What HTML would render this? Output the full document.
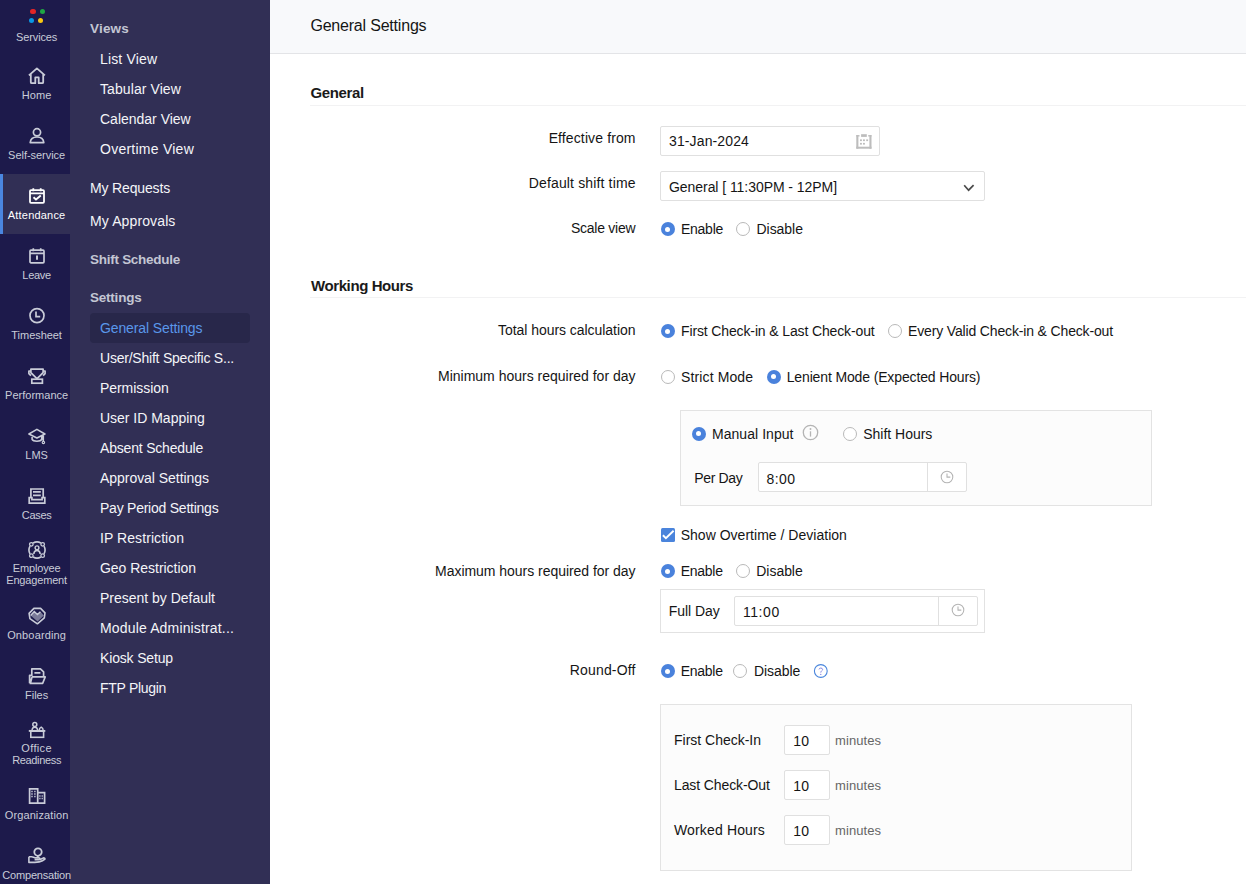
<!DOCTYPE html>
<html><head><meta charset="utf-8"><title>General Settings</title>
<style>
html,body{margin:0;padding:0;width:1246px;height:884px;overflow:hidden;position:relative;font-family:"Liberation Sans", sans-serif;}
.t{position:absolute;line-height:1;white-space:nowrap;}
</style></head><body>
<div style="position:absolute;left:0px;top:0px;width:70px;height:884px;background:#1d1a4b"></div>
<div style="position:absolute;left:70px;top:0px;width:200px;height:884px;background:#312f55"></div>
<div style="position:absolute;left:270px;top:0px;width:976px;height:884px;background:#fff"></div>
<div style="position:absolute;left:30.4px;top:8.6px;width:5.6px;height:5.6px;border-radius:50%;background:#e42527"></div>
<div style="position:absolute;left:39.6px;top:8.6px;width:5.6px;height:5.6px;border-radius:50%;background:#1fa744"></div>
<div style="position:absolute;left:28.6px;top:17.7px;width:5.6px;height:5.6px;border-radius:50%;background:#0a98e5"></div>
<div style="position:absolute;left:37.8px;top:17.7px;width:5.6px;height:5.6px;border-radius:50%;background:#f9c712"></div>
<div class="t" style="top:32.19px;font-size:11px;font-weight:400;color:#c9ccd8;letter-spacing:-0.148px;left:-63.4px;width:200px;text-align:center;">Services</div>
<div style="position:absolute;left:0px;top:174px;width:70px;height:60px;background:#312f55"></div>
<div style="position:absolute;left:0px;top:174px;width:3px;height:60px;background:#4a86e0"></div>
<svg style="position:absolute;left:27.5px;top:67px" width="18" height="18" viewBox="0 0 18 18"><path d="M0.9 8.4 L8.9 1.4 L16.9 8.4 M2.8 6.8 V15.2 Q2.8 16.2 3.8 16.2 H7.3 V10.4 H10.7 V16.2 H14.2 Q15.2 16.2 15.2 15.2 V6.8" fill="none" stroke="#c9ccd8" stroke-width="1.8" stroke-linejoin="round"/></svg>
<div class="t" style="top:89.69px;font-size:11px;font-weight:400;color:#c9ccd8;letter-spacing:0.039px;left:-63.4px;width:200px;text-align:center;">Home</div>
<svg style="position:absolute;left:27.5px;top:127px" width="18" height="18" viewBox="0 0 18 18"><circle cx="9" cy="5.3" r="3.6" fill="none" stroke="#c9ccd8" stroke-width="1.7"/><path d="M2.2 15.6 C2.6 11.5 5.4 10 9 10 C12.6 10 15.4 11.5 15.8 15.6 Z" fill="none" stroke="#c9ccd8" stroke-width="1.7" stroke-linejoin="round"/></svg>
<div class="t" style="top:149.69px;font-size:11px;font-weight:400;color:#c9ccd8;letter-spacing:-0.039px;left:-63.4px;width:200px;text-align:center;">Self-service</div>
<svg style="position:absolute;left:27.5px;top:187px" width="18" height="18" viewBox="0 0 18 18"><rect x="2" y="3.2" width="14" height="12.6" rx="1" fill="none" stroke="#ffffff" stroke-width="1.8"/><path d="M2 6.4 H16 M5.3 1.2 V4.2 M12.7 1.2 V4.2" stroke="#ffffff" stroke-width="1.8"/><path d="M5.5 10.2 L8 12.4 L12.8 8.5" fill="none" stroke="#ffffff" stroke-width="1.9"/></svg>
<div class="t" style="top:209.69px;font-size:11px;font-weight:400;color:#ffffff;letter-spacing:0.204px;left:-63.4px;width:200px;text-align:center;">Attendance</div>
<svg style="position:absolute;left:27.5px;top:247px" width="18" height="18" viewBox="0 0 18 18"><rect x="2" y="3.2" width="14" height="12.6" rx="1" fill="none" stroke="#c9ccd8" stroke-width="1.7"/><path d="M2 6.4 H16 M5.3 1.2 V4.2 M12.7 1.2 V4.2" stroke="#c9ccd8" stroke-width="1.7"/><path d="M9 8.6 V12.8" stroke="#c9ccd8" stroke-width="2"/></svg>
<div class="t" style="top:269.69px;font-size:11px;font-weight:400;color:#c9ccd8;letter-spacing:-0.257px;left:-63.4px;width:200px;text-align:center;">Leave</div>
<svg style="position:absolute;left:27.5px;top:307px" width="18" height="18" viewBox="0 0 18 18"><circle cx="9" cy="8.6" r="7" fill="none" stroke="#c9ccd8" stroke-width="1.7"/><path d="M8 4.5 V9.6 H12.2" fill="none" stroke="#c9ccd8" stroke-width="1.7"/></svg>
<div class="t" style="top:329.69px;font-size:11px;font-weight:400;color:#c9ccd8;letter-spacing:-0.050px;left:-63.4px;width:200px;text-align:center;">Timesheet</div>
<svg style="position:absolute;left:27.5px;top:367px" width="18" height="18" viewBox="0 0 18 18"><path d="M2.9 2.1 H15.1 V5.6 L9.6 11.1 H8.4 L2.9 5.6 Z M2.9 4 H0.9 V6.6 L2.9 8.6 M15.1 4 H17.1 V6.6 L15.1 8.6 M9 11 V12" fill="none" stroke="#c9ccd8" stroke-width="1.7" stroke-linejoin="round"/><rect x="3.8" y="12.2" width="10.6" height="4" fill="none" stroke="#c9ccd8" stroke-width="1.7"/></svg>
<div class="t" style="top:389.69px;font-size:11px;font-weight:400;color:#c9ccd8;letter-spacing:0.011px;left:-63.4px;width:200px;text-align:center;">Performance</div>
<svg style="position:absolute;left:27.5px;top:427px" width="18" height="18" viewBox="0 0 18 18"><path d="M0.9 7 L8.9 2.4 L16.9 7 L8.9 11 Z M4.1 8.8 V12.4 C5.4 14.8 12.4 14.8 13.7 12.4 V8.8 M15.3 7.6 V14.2" fill="none" stroke="#c9ccd8" stroke-width="1.6" stroke-linejoin="round"/><circle cx="15.4" cy="15.5" r="1.2" fill="none" stroke="#c9ccd8" stroke-width="1.2"/></svg>
<div class="t" style="top:449.69px;font-size:11px;font-weight:400;color:#c9ccd8;letter-spacing:0.025px;left:-63.4px;width:200px;text-align:center;">LMS</div>
<svg style="position:absolute;left:27.5px;top:487px" width="18" height="18" viewBox="0 0 18 18"><path d="M2.9 9.8 V2 H15.2 V9.8 M5 4.9 H12.8 M5 8.3 H12.8 M1.2 10.6 H3.9 V12.6 H14.1 V10.6 H16.8 V16.2 H1.2 Z" fill="none" stroke="#c9ccd8" stroke-width="1.7"/></svg>
<div class="t" style="top:509.69px;font-size:11px;font-weight:400;color:#c9ccd8;letter-spacing:-0.338px;left:-63.4px;width:200px;text-align:center;">Cases</div>
<svg style="position:absolute;left:27.5px;top:541px" width="18" height="18" viewBox="0 0 18 18"><path d="M5.12 2.00 A8 8 0 0 1 12.88 2.00 M16.00 5.12 A8 8 0 0 1 16.00 12.88 M12.88 16.00 A8 8 0 0 1 5.12 16.00 M2.00 12.88 A8 8 0 0 1 2.00 5.12" fill="none" stroke="#c9ccd8" stroke-width="1.6"/><circle cx="3.34" cy="3.34" r="1.8" fill="none" stroke="#c9ccd8" stroke-width="1.3"/><circle cx="14.66" cy="3.34" r="1.8" fill="none" stroke="#c9ccd8" stroke-width="1.3"/><circle cx="14.66" cy="14.66" r="1.8" fill="none" stroke="#c9ccd8" stroke-width="1.3"/><circle cx="3.34" cy="14.66" r="1.8" fill="none" stroke="#c9ccd8" stroke-width="1.3"/><circle cx="9" cy="6.8" r="1.9" fill="none" stroke="#c9ccd8" stroke-width="1.4"/><path d="M5.8 13 C6 10.6 7.4 9.6 9 9.6 C10.6 9.6 12 10.6 12.2 13" fill="none" stroke="#c9ccd8" stroke-width="1.5"/></svg>
<div class="t" style="top:563.19px;font-size:11px;font-weight:400;color:#c9ccd8;letter-spacing:-0.153px;left:-63.4px;width:200px;text-align:center;">Employee</div>
<div class="t" style="top:574.69px;font-size:11px;font-weight:400;color:#c9ccd8;letter-spacing:-0.169px;left:-63.4px;width:200px;text-align:center;">Engagement</div>
<svg style="position:absolute;left:27.5px;top:607px" width="18" height="18" viewBox="0 0 18 18"><path d="M5.9 1.4 L12.6 1.4 L17 5.9 L16.3 10.8 L9.4 16.8 L1.9 11.6 L1.1 6.4 Z" fill="none" stroke="#c9ccd8" stroke-width="1.6" stroke-linejoin="round"/><path d="M2.6 8.4 L6.3 4.6 L9.2 7.2 L12.4 4.8 L15.8 8.4 L9.6 14.6 Z" fill="#c9ccd8" fill-opacity="0.55"/><path d="M2.6 8.4 L6.3 4.6 L9.4 7.6 L12.4 4.8" fill="none" stroke="#c9ccd8" stroke-width="1.4"/></svg>
<div class="t" style="top:629.69px;font-size:11px;font-weight:400;color:#c9ccd8;letter-spacing:0.140px;left:-63.4px;width:200px;text-align:center;">Onboarding</div>
<svg style="position:absolute;left:27.5px;top:667px" width="18" height="18" viewBox="0 0 18 18"><path d="M3.8 9 V1.9 H12.4 L15.6 4.9 V9 M6.4 5.9 H12.4 M1.6 16.3 V8.4 H3.8 M3.8 9.9 H17.2 L14.7 16.3 H1.6 M3.9 10.2 L2.5 16" fill="none" stroke="#c9ccd8" stroke-width="1.7" stroke-linejoin="round"/></svg>
<div class="t" style="top:689.69px;font-size:11px;font-weight:400;color:#c9ccd8;letter-spacing:-0.047px;left:-63.4px;width:200px;text-align:center;">Files</div>
<svg style="position:absolute;left:27.5px;top:721px" width="18" height="18" viewBox="0 0 18 18"><circle cx="6.8" cy="3.5" r="2" fill="none" stroke="#c9ccd8" stroke-width="1.5"/><path d="M4 9.9 C4 7.2 5.2 6.3 6.8 6.3 C8.4 6.3 9.6 7.2 9.6 9.9 M11.2 9.6 C11.2 7.8 12 6.8 13.2 6.2 C14.4 6.8 15.2 7.8 15.2 9.6" fill="none" stroke="#c9ccd8" stroke-width="1.5"/><path d="M0.8 9.9 H17.3" stroke="#c9ccd8" stroke-width="1.9"/><rect x="2.8" y="10.2" width="12.8" height="6.1" fill="none" stroke="#c9ccd8" stroke-width="1.6"/></svg>
<div class="t" style="top:743.19px;font-size:11px;font-weight:400;color:#c9ccd8;letter-spacing:0.345px;left:-63.4px;width:200px;text-align:center;">Office</div>
<div class="t" style="top:754.69px;font-size:11px;font-weight:400;color:#c9ccd8;letter-spacing:-0.343px;left:-63.4px;width:200px;text-align:center;">Readiness</div>
<svg style="position:absolute;left:27.5px;top:787px" width="18" height="18" viewBox="0 0 18 18"><path d="M1.6 16.2 V1.9 H9.7 V16.2 Z M9.7 5.6 H16.6 V16.2 H9.7" fill="none" stroke="#c9ccd8" stroke-width="1.7"/><path d="M3.3 4.6 H4.7 M6.2 4.6 H7.6 M3.3 7 H4.7 M6.2 7 H7.6 M3.3 9.6 H4.7 M6.2 9.6 H7.6 M11.3 8.9 H12.5 M13.6 8.9 H14.8 M11.3 11.5 H12.5 M13.6 11.5 H14.8" stroke="#c9ccd8" stroke-width="1.5"/></svg>
<div class="t" style="top:809.69px;font-size:11px;font-weight:400;color:#c9ccd8;letter-spacing:0.119px;left:-63.4px;width:200px;text-align:center;">Organization</div>
<svg style="position:absolute;left:27.5px;top:847px" width="18" height="18" viewBox="0 0 18 18"><circle cx="10" cy="5.1" r="3.7" fill="none" stroke="#c9ccd8" stroke-width="1.8"/><path d="M9.8 8.8 V11.2" stroke="#c9ccd8" stroke-width="1.8"/><path d="M0.9 9.8 H3.6 C5 9.8 6.2 10.8 8 10.8 H10.8 C12.2 10.8 12.2 12.6 10.8 12.6 H6.6 M0.9 9.8 V15.4 H6.8 C9.6 15.4 12 15.2 14.4 13.8 L17 12 C16.8 11 15.8 10.6 14.8 11.2 L12 12.6" fill="none" stroke="#c9ccd8" stroke-width="1.6" stroke-linejoin="round"/></svg>
<div class="t" style="top:869.69px;font-size:11px;font-weight:400;color:#c9ccd8;letter-spacing:-0.203px;left:-63.4px;width:200px;text-align:center;">Compensation</div>
<div class="t" style="top:21.57px;font-size:13.5px;font-weight:700;color:#c3c6d3;letter-spacing:0.194px;left:90px;">Views</div>
<div class="t" style="top:51.75px;font-size:14px;font-weight:400;color:#f4f5f8;letter-spacing:0.158px;left:100px;">List View</div>
<div class="t" style="top:81.75px;font-size:14px;font-weight:400;color:#f4f5f8;letter-spacing:0.083px;left:100px;">Tabular View</div>
<div class="t" style="top:111.75px;font-size:14px;font-weight:400;color:#f4f5f8;letter-spacing:-0.007px;left:100px;">Calendar View</div>
<div class="t" style="top:141.75px;font-size:14px;font-weight:400;color:#f4f5f8;letter-spacing:0.248px;left:100px;">Overtime View</div>
<div class="t" style="top:180.95px;font-size:14px;font-weight:400;color:#f4f5f8;letter-spacing:-0.155px;left:90px;">My Requests</div>
<div class="t" style="top:214.15px;font-size:14px;font-weight:400;color:#f4f5f8;letter-spacing:0.121px;left:90px;">My Approvals</div>
<div class="t" style="top:252.57px;font-size:13.5px;font-weight:700;color:#c3c6d3;letter-spacing:-0.269px;left:90px;">Shift Schedule</div>
<div class="t" style="top:290.57px;font-size:13.5px;font-weight:700;color:#c3c6d3;letter-spacing:-0.221px;left:90px;">Settings</div>
<div style="position:absolute;left:90px;top:313px;width:160px;height:30px;background:#28274a;border-radius:4px"></div>
<div class="t" style="top:321.15px;font-size:14px;font-weight:400;color:#5a97ea;letter-spacing:-0.119px;left:100px;">General Settings</div>
<div class="t" style="top:351.15px;font-size:14px;font-weight:400;color:#f4f5f8;letter-spacing:-0.220px;left:100px;">User/Shift Specific S...</div>
<div class="t" style="top:381.15px;font-size:14px;font-weight:400;color:#f4f5f8;letter-spacing:-0.055px;left:100px;">Permission</div>
<div class="t" style="top:411.15px;font-size:14px;font-weight:400;color:#f4f5f8;letter-spacing:-0.016px;left:100px;">User ID Mapping</div>
<div class="t" style="top:441.15px;font-size:14px;font-weight:400;color:#f4f5f8;letter-spacing:-0.191px;left:100px;">Absent Schedule</div>
<div class="t" style="top:471.15px;font-size:14px;font-weight:400;color:#f4f5f8;letter-spacing:-0.043px;left:100px;">Approval Settings</div>
<div class="t" style="top:501.15px;font-size:14px;font-weight:400;color:#f4f5f8;letter-spacing:-0.240px;left:100px;">Pay Period Settings</div>
<div class="t" style="top:531.15px;font-size:14px;font-weight:400;color:#f4f5f8;letter-spacing:0.071px;left:100px;">IP Restriction</div>
<div class="t" style="top:561.15px;font-size:14px;font-weight:400;color:#f4f5f8;letter-spacing:-0.032px;left:100px;">Geo Restriction</div>
<div class="t" style="top:591.15px;font-size:14px;font-weight:400;color:#f4f5f8;letter-spacing:-0.010px;left:100px;">Present by Default</div>
<div class="t" style="top:621.15px;font-size:14px;font-weight:400;color:#f4f5f8;letter-spacing:0.156px;left:100px;">Module Administrat...</div>
<div class="t" style="top:651.15px;font-size:14px;font-weight:400;color:#f4f5f8;letter-spacing:-0.156px;left:100px;">Kiosk Setup</div>
<div class="t" style="top:681.15px;font-size:14px;font-weight:400;color:#f4f5f8;letter-spacing:-0.300px;left:100px;">FTP Plugin</div>
<div style="position:absolute;left:270px;top:0px;width:976px;height:53px;background:#f8f9fb"></div>
<div style="position:absolute;left:270px;top:53px;width:976px;height:1px;background:#e3e4e7"></div>
<div class="t" style="top:17.96px;font-size:16px;font-weight:400;color:#151515;letter-spacing:-0.199px;left:310.4px;">General Settings</div>
<div class="t" style="top:85.10px;font-size:15px;font-weight:700;color:#1a1a1a;letter-spacing:-0.354px;left:310.4px;">General</div>
<div style="position:absolute;left:310px;top:105px;width:936px;height:1px;background:#f2f2f3"></div>
<div class="t" style="top:131.15px;font-size:14px;font-weight:400;color:#151515;letter-spacing:0.119px;right:610.38px;text-align:right;">Effective from</div>
<div style="position:absolute;left:660px;top:126px;width:220px;height:30px;box-sizing:border-box;border:1px solid #e0e0e0;border-radius:2px;background:#fff"></div>
<div class="t" style="top:134.15px;font-size:14px;font-weight:400;color:#151515;letter-spacing:0.125px;left:669px;">31-Jan-2024</div>
<svg style="position:absolute;left:850px;top:128px" width="30" height="28" viewBox="0 0 30 28"><rect x="6.3" y="7.1" width="2.1" height="13.6" fill="#bdbdbd"/><rect x="19.4" y="7.1" width="2.1" height="13.6" fill="#bdbdbd"/><rect x="6.3" y="18.7" width="15.2" height="2" fill="#bdbdbd"/><rect x="6.3" y="7.1" width="3.2" height="1.4" fill="#bdbdbd"/><rect x="11.1" y="6.2" width="5.7" height="2.7" fill="#bdbdbd"/><rect x="18.2" y="7.1" width="3.3" height="1.4" fill="#bdbdbd"/><rect x="10" y="11.4" width="1.9" height="1.7" fill="#bdbdbd"/><rect x="13" y="11.4" width="1.9" height="1.7" fill="#bdbdbd"/><rect x="16.2" y="11.4" width="1.9" height="1.7" fill="#bdbdbd"/><rect x="10" y="14.9" width="1.9" height="1.7" fill="#bdbdbd"/><rect x="13" y="14.9" width="1.9" height="1.7" fill="#bdbdbd"/></svg>
<div class="t" style="top:176.15px;font-size:14px;font-weight:400;color:#151515;letter-spacing:0.146px;right:610.35px;text-align:right;">Default shift time</div>
<div style="position:absolute;left:660px;top:171px;width:325px;height:30px;box-sizing:border-box;border:1px solid #e0e0e0;border-radius:2px;background:#fff"></div>
<div class="t" style="top:180.15px;font-size:14px;font-weight:400;color:#151515;letter-spacing:-0.055px;left:669px;">General [ 11:30PM - 12PM]</div>
<svg style="position:absolute;left:963px;top:183px" width="12" height="10" viewBox="0 0 12 10"><path d="M1.2 2.2 L5.6 7.2 L10.6 2.2" fill="none" stroke="#4a4a4a" stroke-width="1.7"/></svg>
<div class="t" style="top:221.15px;font-size:14px;font-weight:400;color:#151515;letter-spacing:-0.272px;right:610.77px;text-align:right;">Scale view</div>
<div style="position:absolute;left:660.5px;top:222px;width:14px;height:14px;border-radius:50%;background:#4a82dc"></div><div style="position:absolute;left:665.0px;top:226.5px;width:5px;height:5px;border-radius:50%;background:#fff"></div>
<div class="t" style="top:222.15px;font-size:14px;font-weight:400;color:#151515;letter-spacing:-0.266px;left:681px;">Enable</div>
<div style="position:absolute;left:736px;top:222px;width:14px;height:14px;box-sizing:border-box;border-radius:50%;border:1.5px solid #b9b9b9;background:#fff"></div>
<div class="t" style="top:222.15px;font-size:14px;font-weight:400;color:#151515;letter-spacing:-0.043px;left:756.5px;">Disable</div>
<div class="t" style="top:278.30px;font-size:15px;font-weight:700;color:#1a1a1a;letter-spacing:-0.403px;left:311px;">Working Hours</div>
<div style="position:absolute;left:310px;top:297px;width:936px;height:1px;background:#f2f2f3"></div>
<div class="t" style="top:323.15px;font-size:14px;font-weight:400;color:#151515;letter-spacing:-0.049px;right:610.55px;text-align:right;">Total hours calculation</div>
<div style="position:absolute;left:660.8px;top:324px;width:14px;height:14px;border-radius:50%;background:#4a82dc"></div><div style="position:absolute;left:665.3px;top:328.5px;width:5px;height:5px;border-radius:50%;background:#fff"></div>
<div class="t" style="top:324.15px;font-size:14px;font-weight:400;color:#151515;letter-spacing:-0.130px;left:681px;">First Check-in &amp; Last Check-out</div>
<div style="position:absolute;left:888px;top:324px;width:14px;height:14px;box-sizing:border-box;border-radius:50%;border:1.5px solid #b9b9b9;background:#fff"></div>
<div class="t" style="top:324.15px;font-size:14px;font-weight:400;color:#151515;letter-spacing:-0.151px;left:908px;">Every Valid Check-in &amp; Check-out</div>
<div class="t" style="top:369.15px;font-size:14px;font-weight:400;color:#151515;letter-spacing:-0.005px;right:610.50px;text-align:right;">Minimum hours required for day</div>
<div style="position:absolute;left:660.8px;top:369.6px;width:14px;height:14px;box-sizing:border-box;border-radius:50%;border:1.5px solid #b9b9b9;background:#fff"></div>
<div class="t" style="top:369.75px;font-size:14px;font-weight:400;color:#151515;letter-spacing:0.126px;left:681px;">Strict Mode</div>
<div style="position:absolute;left:766.7px;top:369.6px;width:14px;height:14px;border-radius:50%;background:#4a82dc"></div><div style="position:absolute;left:771.2px;top:374.1px;width:5px;height:5px;border-radius:50%;background:#fff"></div>
<div class="t" style="top:369.75px;font-size:14px;font-weight:400;color:#151515;letter-spacing:-0.137px;left:786.7px;">Lenient Mode (Expected Hours)</div>
<div style="position:absolute;left:680px;top:410px;width:472px;height:96px;box-sizing:border-box;border:1px solid #e3e3e3;background:#fcfcfc"></div>
<div style="position:absolute;left:691.5px;top:426.6px;width:14px;height:14px;border-radius:50%;background:#4a82dc"></div><div style="position:absolute;left:696.0px;top:431.1px;width:5px;height:5px;border-radius:50%;background:#fff"></div>
<div class="t" style="top:427.15px;font-size:14px;font-weight:400;color:#151515;letter-spacing:0.046px;left:712px;">Manual Input</div>
<svg style="position:absolute;left:802px;top:424px" width="17" height="17" viewBox="0 0 17 17"><circle cx="8.5" cy="8.5" r="7.2" fill="none" stroke="#b4b4b4" stroke-width="1.3"/><circle cx="8.5" cy="5" r="0.95" fill="#b4b4b4"/><path d="M8.5 7.3 V12.6" stroke="#b4b4b4" stroke-width="1.3"/></svg>
<div style="position:absolute;left:842.5px;top:426.6px;width:14px;height:14px;box-sizing:border-box;border-radius:50%;border:1.5px solid #b9b9b9;background:#fff"></div>
<div class="t" style="top:427.15px;font-size:14px;font-weight:400;color:#151515;letter-spacing:-0.023px;left:863.3px;">Shift Hours</div>
<div class="t" style="top:470.55px;font-size:14px;font-weight:400;color:#151515;letter-spacing:-0.368px;left:694.3px;">Per Day</div>
<div style="position:absolute;left:758px;top:462px;width:209px;height:30px;box-sizing:border-box;border:1px solid #e0e0e0;border-radius:2px;background:#fff"></div>
<div style="position:absolute;left:927px;top:463px;width:1px;height:28px;background:#e0e0e0"></div>
<div class="t" style="top:471.75px;font-size:14px;font-weight:400;color:#151515;letter-spacing:0.438px;left:766.5px;">8:00</div>
<svg style="position:absolute;left:939.5px;top:469.6px" width="14" height="14" viewBox="0 0 14 14"><circle cx="7" cy="7" r="5.8" fill="none" stroke="#b4b4b4" stroke-width="1.05"/><path d="M7 3.6 V7.1 H10.3" fill="none" stroke="#b4b4b4" stroke-width="1.05"/></svg>
<div style="position:absolute;left:660.5px;top:528px;width:14px;height:14px;background:#4a84dc;border-radius:1.5px"></div>
<svg style="position:absolute;left:660.5px;top:528px" width="14" height="14" viewBox="0 0 14 14"><path d="M1.9 7.3 L4.9 10.2 L12.6 2.8" fill="none" stroke="#fff" stroke-width="1.9"/></svg>
<div class="t" style="top:528.05px;font-size:14px;font-weight:400;color:#151515;letter-spacing:0.019px;left:680.7px;">Show Overtime / Deviation</div>
<div class="t" style="top:563.65px;font-size:14px;font-weight:400;color:#151515;letter-spacing:-0.038px;right:610.54px;text-align:right;">Maximum hours required for day</div>
<div style="position:absolute;left:660.5px;top:564.2px;width:14px;height:14px;border-radius:50%;background:#4a82dc"></div><div style="position:absolute;left:665.0px;top:568.7px;width:5px;height:5px;border-radius:50%;background:#fff"></div>
<div class="t" style="top:564.15px;font-size:14px;font-weight:400;color:#151515;letter-spacing:-0.266px;left:680.7px;">Enable</div>
<div style="position:absolute;left:736px;top:564.2px;width:14px;height:14px;box-sizing:border-box;border-radius:50%;border:1.5px solid #b9b9b9;background:#fff"></div>
<div class="t" style="top:564.15px;font-size:14px;font-weight:400;color:#151515;letter-spacing:-0.043px;left:756.3px;">Disable</div>
<div style="position:absolute;left:660px;top:589px;width:325px;height:44px;box-sizing:border-box;border:1px solid #e2e2e2;background:#fff"></div>
<div class="t" style="top:604.05px;font-size:14px;font-weight:400;color:#151515;letter-spacing:-0.045px;left:668.7px;">Full Day</div>
<div style="position:absolute;left:734px;top:596px;width:244px;height:30px;box-sizing:border-box;border:1px solid #e0e0e0;border-radius:2px;background:#fff"></div>
<div style="position:absolute;left:938px;top:597px;width:1px;height:28px;background:#e0e0e0"></div>
<div class="t" style="top:605.05px;font-size:14px;font-weight:400;color:#151515;letter-spacing:0.600px;left:742.9px;">11:00</div>
<svg style="position:absolute;left:951.2px;top:603.4px" width="14" height="14" viewBox="0 0 14 14"><circle cx="7" cy="7" r="5.8" fill="none" stroke="#b4b4b4" stroke-width="1.05"/><path d="M7 3.6 V7.1 H10.3" fill="none" stroke="#b4b4b4" stroke-width="1.05"/></svg>
<div class="t" style="top:662.85px;font-size:14px;font-weight:400;color:#151515;letter-spacing:0.184px;right:610.32px;text-align:right;">Round-Off</div>
<div style="position:absolute;left:660.5px;top:664.3px;width:14px;height:14px;border-radius:50%;background:#4a82dc"></div><div style="position:absolute;left:665.0px;top:668.8px;width:5px;height:5px;border-radius:50%;background:#fff"></div>
<div class="t" style="top:664.15px;font-size:14px;font-weight:400;color:#151515;letter-spacing:-0.266px;left:680.7px;">Enable</div>
<div style="position:absolute;left:733.2px;top:664.3px;width:14px;height:14px;box-sizing:border-box;border-radius:50%;border:1.5px solid #b9b9b9;background:#fff"></div>
<div class="t" style="top:664.15px;font-size:14px;font-weight:400;color:#151515;letter-spacing:-0.043px;left:753.9px;">Disable</div>
<svg style="position:absolute;left:813px;top:664px" width="15" height="15" viewBox="0 0 15 15"><circle cx="7.8" cy="7" r="6.4" fill="none" stroke="#4a86dc" stroke-width="1.1"/><path d="M6 5.4 C6 3.6 9.6 3.6 9.6 5.4 C9.6 6.8 7.8 6.8 7.8 8.6" fill="none" stroke="#7a7ae0" stroke-width="0.9"/><circle cx="7.8" cy="10.4" r="0.6" fill="#7a7ae0"/></svg>
<div style="position:absolute;left:660px;top:704px;width:472px;height:167px;box-sizing:border-box;border:1px solid #e3e3e3;background:#fcfcfc"></div>
<div class="t" style="top:733.15px;font-size:14px;font-weight:400;color:#151515;letter-spacing:-0.009px;left:674px;">First Check-In</div>
<div style="position:absolute;left:784px;top:725px;width:46px;height:30px;box-sizing:border-box;border:1px solid #e0e0e0;border-radius:2px;background:#fff"></div>
<div class="t" style="top:734.15px;font-size:14px;font-weight:400;color:#151515;letter-spacing:0.211px;left:793.2px;">10</div>
<div class="t" style="top:734.00px;font-size:13px;font-weight:400;color:#666;letter-spacing:0.096px;left:835px;">minutes</div>
<div class="t" style="top:778.15px;font-size:14px;font-weight:400;color:#151515;letter-spacing:-0.105px;left:674px;">Last Check-Out</div>
<div style="position:absolute;left:784px;top:770px;width:46px;height:30px;box-sizing:border-box;border:1px solid #e0e0e0;border-radius:2px;background:#fff"></div>
<div class="t" style="top:779.15px;font-size:14px;font-weight:400;color:#151515;letter-spacing:0.211px;left:793.2px;">10</div>
<div class="t" style="top:779.00px;font-size:13px;font-weight:400;color:#666;letter-spacing:0.096px;left:835px;">minutes</div>
<div class="t" style="top:823.15px;font-size:14px;font-weight:400;color:#151515;letter-spacing:0.148px;left:674px;">Worked Hours</div>
<div style="position:absolute;left:784px;top:815px;width:46px;height:30px;box-sizing:border-box;border:1px solid #e0e0e0;border-radius:2px;background:#fff"></div>
<div class="t" style="top:824.15px;font-size:14px;font-weight:400;color:#151515;letter-spacing:0.211px;left:793.2px;">10</div>
<div class="t" style="top:824.00px;font-size:13px;font-weight:400;color:#666;letter-spacing:0.096px;left:835px;">minutes</div>
</body></html>
